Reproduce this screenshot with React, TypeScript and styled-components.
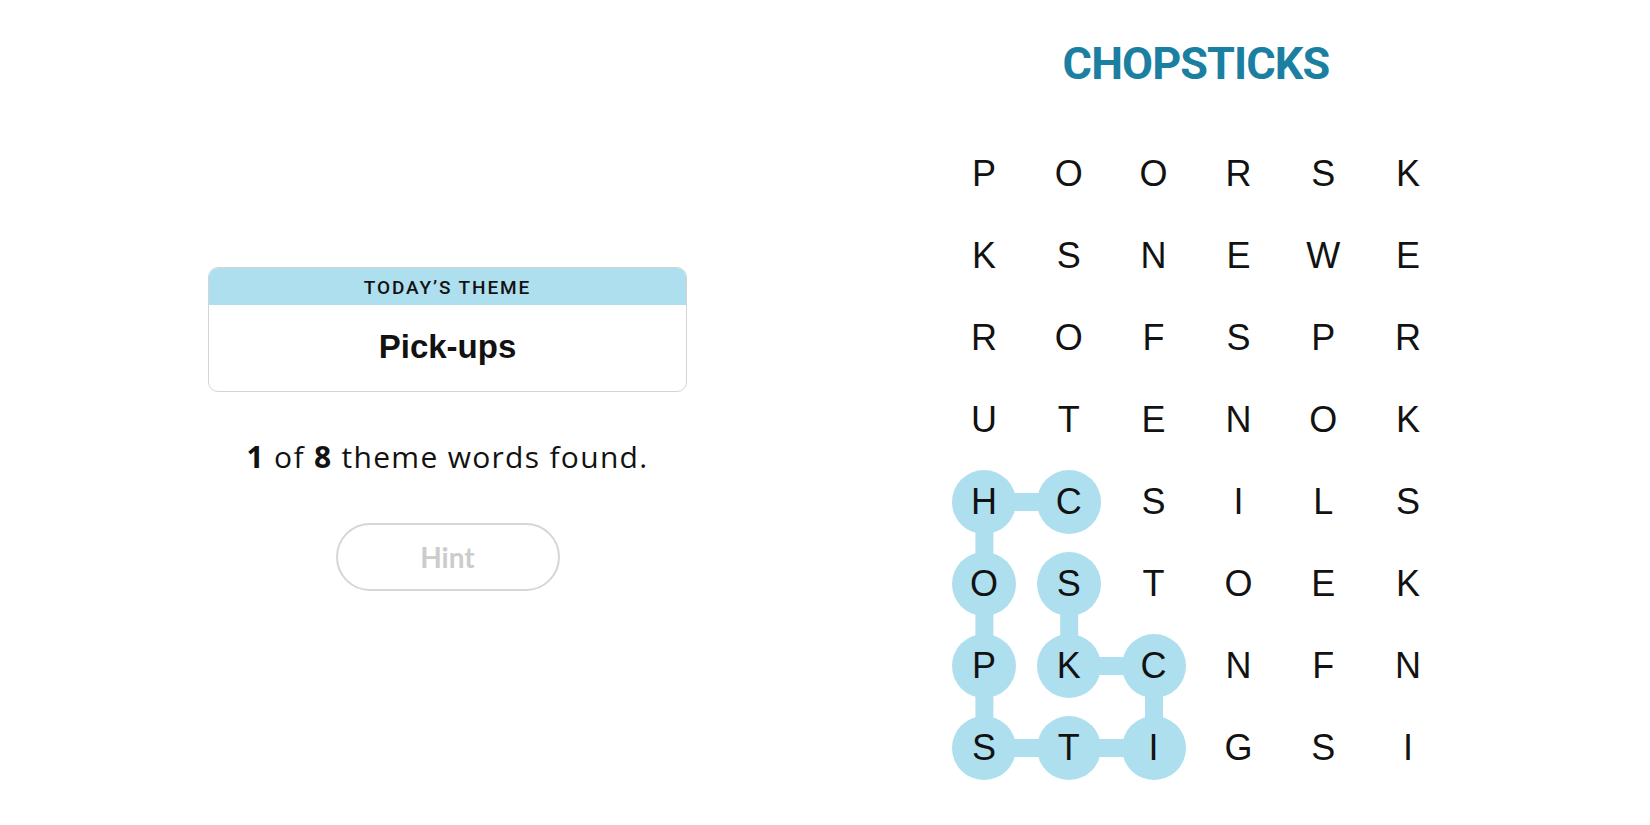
import React from 'react';
import styled, { createGlobalStyle } from 'styled-components';

const GlobalStyle = createGlobalStyle`
  html, body {
    margin: 0;
    padding: 0;
    background: #ffffff;
  }
  body {
    font-family: "Liberation Sans", Arial, sans-serif;
    color: #121212;
  }
`;

const CELL_W = 84.8;
const CELL_H = 82;

const letters = [
  'POORSK',
  'KSNEWE',
  'ROFSPR',
  'UTENOK',
  'HCSILS',
  'OSTOEK',
  'PKCNFN',
  'STIGSI',
];

// found word path, [row, col]
const found: [number, number][] = [
  [4, 1], [4, 0], [5, 0], [6, 0], [7, 0], [7, 1], [7, 2], [6, 2], [6, 1], [5, 1],
];

const isFound = (r: number, c: number) => found.some(([fr, fc]) => fr === r && fc === c);

const Page = styled.main`
  display: grid;
  grid-template-columns: 895px 602px;
  width: 1650px;
  height: 825px;
  overflow: hidden;
`;

const LeftColumn = styled.section`
  display: flex;
  flex-direction: column;
  align-items: center;
  padding-top: 267px;
`;

const ThemeCard = styled.div`
  width: 479px;
  height: 125px;
  box-sizing: border-box;
  border: 1.5px solid #d4d4d4;
  border-radius: 10px;
  overflow: hidden;
  display: flex;
  flex-direction: column;
`;

const ThemeHeader = styled.div`
  height: 36px;
  background: #aedfee;
  display: flex;
  align-items: center;
  justify-content: center;
  font-family: Roboto, "Liberation Sans", sans-serif;
  font-weight: 500;
  font-size: 19px;
  letter-spacing: 1.9px;
  color: #121212;
  padding-top: 1px;
`;

const ThemeBody = styled.div`
  flex: 1;
  display: flex;
  align-items: center;
  justify-content: center;
  font-weight: 700;
  font-size: 33px;
  color: #121212;
  padding-bottom: 2px;
`;

const FoundLine = styled.p`
  margin: 44px 0 0;
  font-family: "Open Sans", sans-serif;
  font-size: 30px;
  letter-spacing: 1.3px;
  color: #121212;

  b {
    font-weight: 700;
  }
`;

const HintButton = styled.button`
  margin-top: 46px;
  width: 224px;
  height: 68px;
  border: 2px solid #d6d6d6;
  border-radius: 34px;
  background: #ffffff;
  font-family: Lato, sans-serif;
  font-weight: 700;
  font-size: 28px;
  color: #cccccc;
  cursor: default;
`;

const RightColumn = styled.section`
  display: flex;
  flex-direction: column;
  align-items: center;
`;

const Title = styled.h1`
  margin: 38px 0 0;
  font-family: Roboto, "Liberation Sans", sans-serif;
  font-weight: 700;
  font-size: 45px;
  line-height: 52px;
  letter-spacing: -0.9px;
  color: #1a7fa1;
`;

const Board = styled.div`
  position: relative;
  margin-top: 43px;
  display: grid;
  grid-template-columns: repeat(6, ${CELL_W}px);
  grid-template-rows: repeat(8, ${CELL_H}px);
`;

const Links = styled.svg`
  position: absolute;
  inset: 0;
  width: 100%;
  height: 100%;
  pointer-events: none;
`;

const Cell = styled.div<{ $found: boolean }>`
  position: relative;
  display: flex;
  align-items: center;
  justify-content: center;

  span {
    display: flex;
    align-items: center;
    justify-content: center;
    width: 64px;
    height: 64px;
    border-radius: 50%;
    background: ${p => (p.$found ? '#aedfee' : 'transparent')};
    font-size: 36px;
    color: #121212;
  }
`;

const center = (r: number, c: number) => [c * CELL_W + CELL_W / 2, r * CELL_H + CELL_H / 2];

export default function App() {
  const points = found.map(([r, c]) => center(r, c).join(',')).join(' ');
  return (
    <>
      <GlobalStyle />
      <Page>
        <LeftColumn>
          <ThemeCard>
            <ThemeHeader>TODAY’S THEME</ThemeHeader>
            <ThemeBody>Pick-ups</ThemeBody>
          </ThemeCard>
          <FoundLine>
            <b>1</b> of <b>8</b> theme words found.
          </FoundLine>
          <HintButton>Hint</HintButton>
        </LeftColumn>
        <RightColumn>
          <Title>CHOPSTICKS</Title>
          <Board>
            <Links viewBox={`0 0 ${CELL_W * 6} ${CELL_H * 8}`}>
              <polyline points={points} fill="none" stroke="#aedfee" strokeWidth={18} />
            </Links>
            {letters.map((row, r) =>
              row.split('').map((ch, c) => (
                <Cell key={`${r}-${c}`} $found={isFound(r, c)}>
                  <span>{ch}</span>
                </Cell>
              ))
            )}
          </Board>
        </RightColumn>
      </Page>
    </>
  );
}
